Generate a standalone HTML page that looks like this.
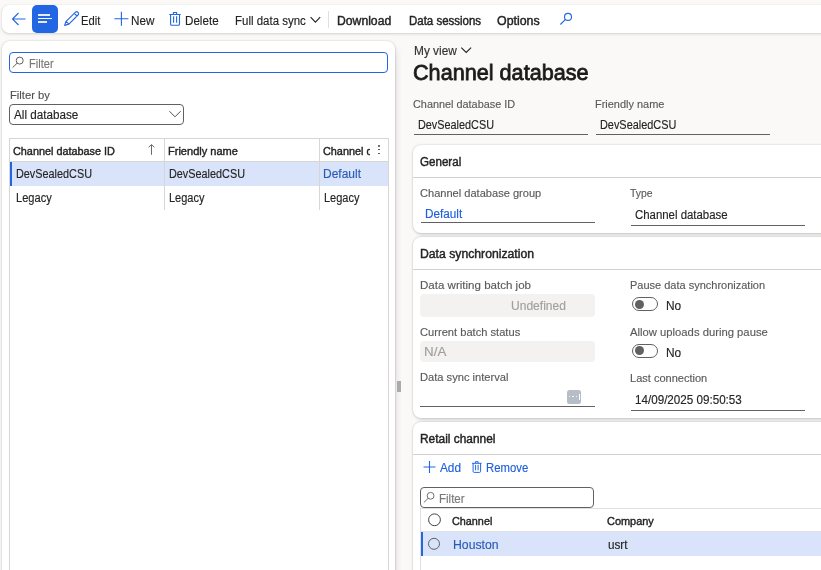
<!DOCTYPE html>
<html><head><meta charset="utf-8">
<style>
*{box-sizing:border-box;margin:0;padding:0}
html,body{width:821px;height:570px;overflow:hidden;background:#faf9f8;font-family:"Liberation Sans",sans-serif;color:#242424}
.a{position:absolute}
.tx{position:absolute;white-space:nowrap;transform-origin:0 0}
svg{position:absolute;overflow:visible}
.card{position:absolute;background:#fff;border-radius:8px;box-shadow:0 0 2px rgba(0,0,0,.18),0 1px 3px rgba(0,0,0,.12)}
.hl{position:absolute;height:1px;background:#e0e0e0}
.vl{position:absolute;width:1px;background:#e0e0e0}
.ul{position:absolute;height:1px;background:#616161}
</style></head><body>
<!-- toolbar -->
<div class="a" style="left:2px;top:4.5px;width:840px;height:28.5px;background:#fff;border-radius:7px;box-shadow:0 1px 3px rgba(0,0,0,.16),0 0 1px rgba(0,0,0,.10)"></div>
<div class="a" style="left:32px;top:5px;width:26px;height:28px;background:#2266e3;border-radius:5px"></div>
<!-- hamburger lines -->
<div class="a" style="left:38px;top:14.4px;width:11.8px;height:1.6px;background:rgba(255,255,255,.88)"></div>
<div class="a" style="left:38px;top:17.8px;width:14.4px;height:1.5px;background:#fff"></div>
<div class="a" style="left:38px;top:21.2px;width:9px;height:1.6px;background:rgba(255,255,255,.88)"></div>
<!-- back arrow -->
<svg style="left:0;top:0" width="30" height="36"><path d="M25.5 19H12.5 M18.5 13L12.5 19L18.5 25" fill="none" stroke="#2266e3" stroke-width="1.1"/></svg>
<!-- pencil -->
<svg style="left:0;top:0" width="90" height="36"><path d="M66.1 21.3L75.3 12.3A1.9 1.9 0 0 1 78 15L68.9 24.1L64.6 25.4Z M74.3 13.3L77 16 M66.1 21.3L68.9 24.1" fill="none" stroke="#2266e3" stroke-width="1.1" stroke-linejoin="round"/></svg>
<!-- plus -->
<svg style="left:0;top:0" width="140" height="36"><path d="M121.4 11.8V25.8 M114.4 18.8H128.4" fill="none" stroke="#2266e3" stroke-width="1.1"/></svg>
<!-- trash -->
<svg style="left:0;top:0" width="190" height="36"><path d="M173.4 14.3V12.5H176.6V14.3 M169.3 14.5H180.7 M170.6 14.5V24a1.3 1.3 0 0 0 1.3 1.3H178.2a1.3 1.3 0 0 0 1.3-1.3V14.5 M173.6 16.2V22.8 M176.6 16.2V22.8" fill="none" stroke="#2266e3" stroke-width="1.1"/></svg>
<!-- chevron full data sync -->
<svg style="left:0;top:0" width="330" height="36"><path d="M310.6 17.2L315.4 22.2L320.2 17.2" fill="none" stroke="#242424" stroke-width="1.1"/></svg>
<div class="a" style="left:327.5px;top:10.5px;width:1px;height:17px;background:#e0e0e0"></div>
<!-- search -->
<svg style="left:0;top:0" width="580" height="36"><circle cx="568" cy="16.9" r="3.5" fill="none" stroke="#2266e3" stroke-width="1.1"/><path d="M565.5 19.4L560.4 24.5" fill="none" stroke="#2266e3" stroke-width="1.1"/></svg>

<!-- left panel -->
<div class="card" style="left:2px;top:40.5px;width:393px;height:560px"></div>
<div class="a" style="left:9px;top:52px;width:379px;height:21px;border:1.5px solid #2266e3;border-radius:4px"></div>
<svg style="left:0;top:0" width="40" height="80"><circle cx="19.7" cy="60.6" r="3.5" fill="none" stroke="#616161" stroke-width="1"/><path d="M17.2 63.1L12.6 67.6" fill="none" stroke="#616161" stroke-width="1"/></svg>
<div class="a" style="left:9.2px;top:104px;width:175px;height:20.6px;border:1px solid #616161;border-radius:4px"></div>
<svg style="left:0;top:0" width="200" height="130"><path d="M169.4 111.2L175 116.8L180.6 111.2" fill="none" stroke="#505050" stroke-width="1"/></svg>
<!-- grid -->
<div class="a" style="left:9px;top:138px;width:380px;height:440px;border:1px solid #d6d6d6;border-bottom:none"></div>
<div class="a" style="left:10px;top:161px;width:378px;height:1px;background:#d6d6d6"></div>
<div class="a" style="left:10px;top:162px;width:378px;height:24px;background:#d9e4fa"></div>
<div class="a" style="left:10px;top:162px;width:2px;height:24px;background:#2266e3"></div>
<div class="a" style="left:164px;top:139px;width:1px;height:71px;background:#d6d6d6"></div>
<div class="a" style="left:319px;top:139px;width:1px;height:71px;background:#d6d6d6"></div>
<!-- sort arrow -->
<svg style="left:0;top:0" width="160" height="160"><path d="M151.5 154.8V144.8 M148.6 147.3L151.5 144.6L154.4 147.3" fill="none" stroke="#6a6a6a" stroke-width="1"/></svg>
<!-- col options -->
<div class="a" style="left:378px;top:145px;width:1.6px;height:1.6px;background:#424242;border-radius:1px"></div>
<div class="a" style="left:378px;top:148.8px;width:1.6px;height:1.6px;background:#424242;border-radius:1px"></div>
<div class="a" style="left:378px;top:152.6px;width:1.6px;height:1.6px;background:#424242;border-radius:1px"></div>

<!-- splitter -->
<div class="a" style="left:395px;top:44px;width:7px;height:540px;background:linear-gradient(to right,rgba(0,0,0,.055),rgba(0,0,0,0));-webkit-mask-image:linear-gradient(to bottom,transparent,#000 14px)"></div>
<div class="a" style="left:397px;top:381px;width:4px;height:11px;background:#ababab"></div>

<!-- right: header fields -->
<svg style="left:0;top:0" width="480" height="60"><path d="M461.3 47.6L466.2 52.5L471.1 47.6" fill="none" stroke="#242424" stroke-width="1.1"/></svg>
<div class="ul" style="left:413.5px;top:134px;width:174px"></div>
<div class="ul" style="left:595.5px;top:134px;width:174px"></div>

<div class="a" style="left:415px;top:232px;width:430px;height:6px;background:linear-gradient(to right,rgba(240,239,238,0),#f0efee 7px)"></div>
<div class="a" style="left:415px;top:417px;width:430px;height:6px;background:linear-gradient(to right,rgba(240,239,238,0),#f0efee 7px)"></div>
<!-- General card -->
<div class="card" style="left:413px;top:145.3px;width:430px;height:87.5px"></div>
<div class="a" style="left:413px;top:177px;width:430px;height:1px;background:#d1d1d1"></div>
<div class="ul" style="left:420.5px;top:222px;width:174.5px"></div>
<div class="ul" style="left:630.5px;top:225px;width:174px"></div>

<!-- Data sync card -->
<div class="card" style="left:413px;top:237.3px;width:430px;height:180.8px"></div>
<div class="a" style="left:413px;top:269px;width:430px;height:1px;background:#d1d1d1"></div>
<div class="a" style="left:420px;top:294px;width:175px;height:23px;background:#f3f2f1;border-radius:4px"></div>
<div class="a" style="left:420px;top:341.2px;width:175px;height:20.5px;background:#f3f2f1;border-radius:4px"></div>
<div class="ul" style="left:420px;top:406px;width:175px"></div>
<div class="a" style="left:567px;top:389.5px;width:14px;height:14px;background:#b7bdc7;border-radius:2.5px"></div>
<div class="a" style="left:569px;top:396.2px;width:1.3px;height:1.3px;background:#fff;border-radius:.5px"></div>
<div class="a" style="left:572.3px;top:396.2px;width:1.3px;height:1.3px;background:#fff;border-radius:.5px"></div>
<div class="a" style="left:575.6px;top:396.2px;width:1.3px;height:1.3px;background:#fff;border-radius:.5px"></div>
<div class="a" style="left:578.6px;top:393.5px;width:.8px;height:6.5px;background:#fff"></div>
<!-- toggles -->
<div class="a" style="left:632px;top:297px;width:26px;height:13.6px;border:1px solid #616161;border-radius:7px"></div>
<div class="a" style="left:635px;top:299.7px;width:9px;height:9px;background:#616161;border-radius:50%"></div>
<div class="a" style="left:632px;top:344.2px;width:26px;height:13.6px;border:1px solid #616161;border-radius:7px"></div>
<div class="a" style="left:635px;top:345.7px;width:9px;height:9px;background:#616161;border-radius:50%"></div>
<div class="ul" style="left:630.5px;top:410px;width:174px"></div>

<!-- Retail channel card -->
<div class="card" style="left:413px;top:421.7px;width:430px;height:200px"></div>
<div class="a" style="left:413px;top:454px;width:430px;height:1px;background:#d1d1d1"></div>
<svg style="left:0;top:0" width="500" height="480"><path d="M429.5 461V473 M423.5 467H435.5" fill="none" stroke="#2266e3" stroke-width="1.1"/>
<path d="M475.4 463.1V461.7H478.1V463.1 M472 463.3H481.6 M473.1 463.3V471.3a1.1 1.1 0 0 0 1.1 1.1H479.5a1.1 1.1 0 0 0 1.1-1.1V463.3 M475.6 464.8V470.3 M478.1 464.8V470.3" fill="none" stroke="#2266e3" stroke-width="1"/></svg>
<div class="a" style="left:420.2px;top:487px;width:174px;height:20.5px;border:1px solid #616161;border-radius:4px"></div>
<svg style="left:0;top:0" width="440" height="510"><circle cx="430.6" cy="495.8" r="3.4" fill="none" stroke="#707070" stroke-width="1"/><path d="M428.2 498.3L423.8 502.5" fill="none" stroke="#707070" stroke-width="1"/></svg>
<div class="a" style="left:420px;top:508px;width:430px;height:100px;border-left:1px solid #e0e0e0;border-top:1px solid #e0e0e0"></div>
<div class="a" style="left:421px;top:531px;width:430px;height:1px;background:#e0e0e0"></div>
<div class="a" style="left:421px;top:532px;width:430px;height:24px;background:#d9e4fa"></div>
<div class="a" style="left:421px;top:532px;width:2px;height:24px;background:#2266e3"></div>
<svg style="left:0;top:0" width="450" height="560"><circle cx="434.5" cy="519.8" r="5.9" fill="none" stroke="#424242" stroke-width="1"/><circle cx="434" cy="543.8" r="5.5" fill="none" stroke="#616161" stroke-width="1"/></svg>

<div class="tx" style="left:80.80px;top:15px;font-size:12.5px;line-height:12.5px;color:#242424;transform:scaleX(0.8960);-webkit-text-stroke:0.15px #242424;">Edit</div>
<div class="tx" style="left:130.50px;top:15px;font-size:12.5px;line-height:12.5px;color:#242424;transform:scaleX(0.9345);-webkit-text-stroke:0.15px #242424;">New</div>
<div class="tx" style="left:184.60px;top:15px;font-size:12.5px;line-height:12.5px;color:#242424;transform:scaleX(0.9300);-webkit-text-stroke:0.15px #242424;">Delete</div>
<div class="tx" style="left:234.90px;top:15px;font-size:12.5px;line-height:12.5px;color:#242424;transform:scaleX(0.9180);-webkit-text-stroke:0.15px #242424;">Full data sync</div>
<div class="tx" style="left:337.20px;top:15px;font-size:12.5px;line-height:12.5px;color:#242424;transform:scaleX(0.9750);-webkit-text-stroke:0.45px #242424;">Download</div>
<div class="tx" style="left:409.00px;top:15px;font-size:12.5px;line-height:12.5px;color:#242424;transform:scaleX(0.9184);-webkit-text-stroke:0.45px #242424;">Data sessions</div>
<div class="tx" style="left:497.30px;top:15px;font-size:12.5px;line-height:12.5px;color:#242424;transform:scaleX(0.9912);-webkit-text-stroke:0.45px #242424;">Options</div>
<div class="tx" style="left:28.60px;top:58px;font-size:12.5px;line-height:12.5px;color:#787878;transform:scaleX(0.8855);-webkit-text-stroke:0.15px #787878;">Filter</div>
<div class="tx" style="left:9.60px;top:90px;font-size:11.5px;line-height:11.5px;color:#505050;transform:scaleX(0.9756);-webkit-text-stroke:0.15px #505050;">Filter by</div>
<div class="tx" style="left:14.10px;top:109px;font-size:12.5px;line-height:12.5px;color:#242424;transform:scaleX(0.9346);-webkit-text-stroke:0.15px #242424;">All database</div>
<div class="tx" style="left:13.00px;top:146px;font-size:11px;line-height:11px;color:#242424;transform:scaleX(0.9860);-webkit-text-stroke:0.40px #242424;">Channel database ID</div>
<div class="tx" style="left:168.30px;top:146px;font-size:11px;line-height:11px;color:#242424;transform:scaleX(1.0029);-webkit-text-stroke:0.40px #242424;">Friendly name</div>
<div class="tx" style="left:16.40px;top:168px;font-size:12.5px;line-height:12.5px;color:#242424;transform:scaleX(0.8682);-webkit-text-stroke:0.15px #242424;">DevSealedCSU</div>
<div class="tx" style="left:169.10px;top:168px;font-size:12.5px;line-height:12.5px;color:#242424;transform:scaleX(0.8682);-webkit-text-stroke:0.15px #242424;">DevSealedCSU</div>
<div class="tx" style="left:323.20px;top:168px;font-size:12.5px;line-height:12.5px;color:#2b5bb5;transform:scaleX(0.9594);-webkit-text-stroke:0.15px #2b5bb5;">Default</div>
<div class="tx" style="left:16.40px;top:192px;font-size:12.5px;line-height:12.5px;color:#242424;transform:scaleX(0.8856);-webkit-text-stroke:0.15px #242424;">Legacy</div>
<div class="tx" style="left:169.10px;top:192px;font-size:12.5px;line-height:12.5px;color:#242424;transform:scaleX(0.8807);-webkit-text-stroke:0.15px #242424;">Legacy</div>
<div class="tx" style="left:324.10px;top:192px;font-size:12.5px;line-height:12.5px;color:#242424;transform:scaleX(0.8807);-webkit-text-stroke:0.15px #242424;">Legacy</div>
<div class="tx" style="left:414.10px;top:45px;font-size:12.5px;line-height:12.5px;color:#323130;transform:scaleX(0.9497);-webkit-text-stroke:0.15px #323130;">My view</div>
<div class="tx" style="left:413.40px;top:62px;font-size:22.5px;line-height:22.5px;color:#1b1b1b;transform:scaleX(0.9614);-webkit-text-stroke:0.81px #1b1b1b;">Channel database</div>
<div class="tx" style="left:413.00px;top:99px;font-size:11.5px;line-height:11.5px;color:#5a5a5a;transform:scaleX(0.9449);-webkit-text-stroke:0.15px #5a5a5a;">Channel database ID</div>
<div class="tx" style="left:594.90px;top:99px;font-size:11.5px;line-height:11.5px;color:#5a5a5a;transform:scaleX(0.9525);-webkit-text-stroke:0.15px #5a5a5a;">Friendly name</div>
<div class="tx" style="left:418.40px;top:119px;font-size:12.5px;line-height:12.5px;color:#242424;transform:scaleX(0.8682);-webkit-text-stroke:0.15px #242424;">DevSealedCSU</div>
<div class="tx" style="left:600.20px;top:119px;font-size:12.5px;line-height:12.5px;color:#242424;transform:scaleX(0.8716);-webkit-text-stroke:0.15px #242424;">DevSealedCSU</div>
<div class="tx" style="left:419.90px;top:156px;font-size:12px;line-height:12px;color:#242424;transform:scaleX(0.9651);-webkit-text-stroke:0.43px #242424;">General</div>
<div class="tx" style="left:420.10px;top:188px;font-size:11.5px;line-height:11.5px;color:#5a5a5a;transform:scaleX(0.9622);-webkit-text-stroke:0.15px #5a5a5a;">Channel database group</div>
<div class="tx" style="left:630.30px;top:188px;font-size:11.5px;line-height:11.5px;color:#5a5a5a;transform:scaleX(0.9065);-webkit-text-stroke:0.15px #5a5a5a;">Type</div>
<div class="tx" style="left:424.60px;top:208px;font-size:12.5px;line-height:12.5px;color:#1f5fdc;transform:scaleX(0.9392);-webkit-text-stroke:0.15px #1f5fdc;">Default</div>
<div class="tx" style="left:634.90px;top:209px;font-size:12.5px;line-height:12.5px;color:#242424;transform:scaleX(0.9126);-webkit-text-stroke:0.15px #242424;">Channel database</div>
<div class="tx" style="left:420.10px;top:248px;font-size:12px;line-height:12px;color:#242424;transform:scaleX(1.0173);-webkit-text-stroke:0.43px #242424;">Data synchronization</div>
<div class="tx" style="left:420.00px;top:280px;font-size:11.5px;line-height:11.5px;color:#5a5a5a;transform:scaleX(1.0037);-webkit-text-stroke:0.15px #5a5a5a;">Data writing batch job</div>
<div class="tx" style="left:510.70px;top:300px;font-size:12.5px;line-height:12.5px;color:#a19f9d;transform:scaleX(0.9633);-webkit-text-stroke:0.15px #a19f9d;">Undefined</div>
<div class="tx" style="left:630.20px;top:280px;font-size:11.5px;line-height:11.5px;color:#5a5a5a;transform:scaleX(0.9562);-webkit-text-stroke:0.15px #5a5a5a;">Pause data synchronization</div>
<div class="tx" style="left:665.60px;top:300px;font-size:12.5px;line-height:12.5px;color:#242424;transform:scaleX(0.9512);-webkit-text-stroke:0.15px #242424;">No</div>
<div class="tx" style="left:420.00px;top:327px;font-size:11.5px;line-height:11.5px;color:#5a5a5a;transform:scaleX(0.9676);-webkit-text-stroke:0.15px #5a5a5a;">Current batch status</div>
<div class="tx" style="left:423.80px;top:346px;font-size:12.5px;line-height:12.5px;color:#a19f9d;transform:scaleX(1.0701);-webkit-text-stroke:0.15px #a19f9d;">N/A</div>
<div class="tx" style="left:630.20px;top:327px;font-size:11.5px;line-height:11.5px;color:#5a5a5a;transform:scaleX(0.9797);-webkit-text-stroke:0.15px #5a5a5a;">Allow uploads during pause</div>
<div class="tx" style="left:665.60px;top:347px;font-size:12.5px;line-height:12.5px;color:#242424;transform:scaleX(0.9512);-webkit-text-stroke:0.15px #242424;">No</div>
<div class="tx" style="left:420.00px;top:372px;font-size:11.5px;line-height:11.5px;color:#5a5a5a;transform:scaleX(0.9683);-webkit-text-stroke:0.15px #5a5a5a;">Data sync interval</div>
<div class="tx" style="left:630.20px;top:373px;font-size:11.5px;line-height:11.5px;color:#5a5a5a;transform:scaleX(0.9583);-webkit-text-stroke:0.15px #5a5a5a;">Last connection</div>
<div class="tx" style="left:635.10px;top:394px;font-size:12.5px;line-height:12.5px;color:#242424;transform:scaleX(0.9312);-webkit-text-stroke:0.15px #242424;">14/09/2025 09:50:53</div>
<div class="tx" style="left:420.00px;top:433px;font-size:12px;line-height:12px;color:#242424;transform:scaleX(0.9915);-webkit-text-stroke:0.43px #242424;">Retail channel</div>
<div class="tx" style="left:439.50px;top:462px;font-size:12.5px;line-height:12.5px;color:#1f5fdc;transform:scaleX(0.9442);-webkit-text-stroke:0.15px #1f5fdc;">Add</div>
<div class="tx" style="left:486.30px;top:462px;font-size:12.5px;line-height:12.5px;color:#1f5fdc;transform:scaleX(0.9066);-webkit-text-stroke:0.15px #1f5fdc;">Remove</div>
<div class="tx" style="left:439.00px;top:493px;font-size:12.5px;line-height:12.5px;color:#787878;transform:scaleX(0.9215);-webkit-text-stroke:0.15px #787878;">Filter</div>
<div class="tx" style="left:452.20px;top:516px;font-size:11px;line-height:11px;color:#242424;transform:scaleX(0.9834);-webkit-text-stroke:0.40px #242424;">Channel</div>
<div class="tx" style="left:607.40px;top:516px;font-size:11px;line-height:11px;color:#242424;transform:scaleX(0.9941);-webkit-text-stroke:0.40px #242424;">Company</div>
<div class="tx" style="left:452.70px;top:539px;font-size:12.5px;line-height:12.5px;color:#2b5bb5;transform:scaleX(0.9794);-webkit-text-stroke:0.15px #2b5bb5;">Houston</div>
<div class="tx" style="left:608.40px;top:539px;font-size:12.5px;line-height:12.5px;color:#242424;transform:scaleX(0.9357);-webkit-text-stroke:0.15px #242424;">usrt</div>
<div class="a" style="left:0;top:139px;width:370px;height:22px;overflow:hidden;clip-path:inset(0 0 0 320px)"><div class="tx" style="left:323.00px;top:7px;font-size:11px;line-height:11px;color:#242424;transform:scaleX(0.9860);-webkit-text-stroke:0.40px #242424;">Channel database group</div></div>
</body></html>
